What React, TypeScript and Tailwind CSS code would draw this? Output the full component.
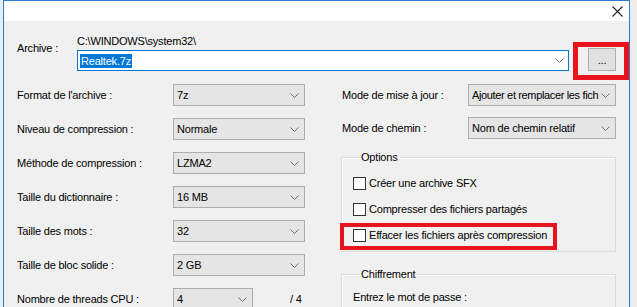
import React from 'react';

const font = { fontFamily: '"Liberation Sans", Arial, sans-serif' };

function Chevron() {
    return (
        <svg width="9" height="5" viewBox="0 0 9 5" className="shrink-0">
            <path d="M0.5 0.5 L4.5 4.5 L8.5 0.5" fill="none" stroke="#707070" strokeWidth="1" />
        </svg>
    );
}

function Select({ value, width }: { value: string; width: string }) {
    return (
        <div
            className={`${width} h-[22px] flex items-center border border-[#adadad] bg-[#e5e5e5] pl-[3px] pr-[5px]`}
        >
            <span className="flex-1 overflow-hidden whitespace-nowrap">{value}</span>
            <Chevron />
        </div>
    );
}

function Row({ label, children }: { label: string; children: React.ReactNode }) {
    return (
        <div className="flex items-center h-[22px]">
            <span className="w-[156px] shrink-0">{label}</span>
            {children}
        </div>
    );
}

function Check({ label }: { label: string }) {
    return (
        <div className="flex items-center h-[16px]">
            <span className="w-[13px] h-[13px] border border-[#333333] bg-white shrink-0" />
            <span className="ml-[3px]">{label}</span>
        </div>
    );
}

export default function App() {
    return (
        <div
            className="relative w-[637px] h-[307px] overflow-hidden bg-[#ececec] text-[11px] leading-[14px] tracking-[-0.2px] text-black"
            style={font}
        >
            <div className="ml-[3px] w-[627px] h-[307px] border-x border-t border-[#2a7ecf] flex flex-col">
                {/* title bar */}
                <div className="h-[20px] bg-white flex justify-end items-center pr-[6px] shrink-0">
                    <svg width="11" height="11" viewBox="0 0 11 11">
                        <path d="M0.5 0.5 L10.5 10.5 M10.5 0.5 L0.5 10.5" stroke="#222" strokeWidth="1.1" />
                    </svg>
                </div>

                <div className="flex-1 bg-[#f0f0f0] pl-[13px] pt-[13px]">
                    {/* archive */}
                    <div className="flex items-start">
                        <span className="w-[60px] pt-[7px]">Archive :</span>
                        <div className="flex flex-col">
                            <span className="h-[14px]">C:\WINDOWS\system32\</span>
                            <div className="mt-[2px] w-[492px] h-[21px] bg-white border border-[#0078d7] flex items-center pl-[2px] pr-[4px]">
                                <span className="flex-1">
                                    <span className="bg-[#0078d7] text-white px-[1px] py-[1px]">Realtek.7z</span>
                                </span>
                                <Chevron />
                            </div>
                        </div>
                        <div className="ml-[19px] mt-[14px] w-[28px] h-[23px] border border-[#adadad] bg-[#e1e1e1] flex items-center justify-center">
                            ...
                        </div>
                    </div>

                    <div className="flex mt-[13px]">
                        {/* left column */}
                        <div className="flex flex-col gap-[12px] w-[324px]">
                            <Row label="Format de l'archive :">
                                <Select value="7z" width="w-[132px]" />
                            </Row>
                            <Row label="Niveau de compression :">
                                <Select value="Normale" width="w-[132px]" />
                            </Row>
                            <Row label="Méthode de compression :">
                                <Select value="LZMA2" width="w-[132px]" />
                            </Row>
                            <Row label="Taille du dictionnaire :">
                                <Select value="16 MB" width="w-[132px]" />
                            </Row>
                            <Row label="Taille des mots :">
                                <Select value="32" width="w-[132px]" />
                            </Row>
                            <Row label="Taille de bloc solide :">
                                <Select value="2 GB" width="w-[132px]" />
                            </Row>
                            <Row label="Nombre de threads CPU :">
                                <Select value="4" width="w-[80px]" />
                                <span className="ml-[37px]">/ 4</span>
                            </Row>
                        </div>

                        {/* right column */}
                        <div className="flex flex-col w-[275px]">
                            <div className="flex items-center h-[22px] pl-[1px]">
                                <span className="w-[126px] shrink-0">Mode de mise à jour :</span>
                                <div className="w-[148px] h-[22px] flex items-center border border-[#adadad] bg-[#e5e5e5] pl-[3px] pr-[5px]">
                                    <span className="flex-1 whitespace-nowrap tracking-[-0.35px]">
                                        Ajouter et remplacer les fich
                                    </span>
                                    <Chevron />
                                </div>
                            </div>
                            <div className="flex items-center h-[22px] pl-[1px] mt-[11px]">
                                <span className="w-[126px] shrink-0">Mode de chemin :</span>
                                <Select value="Nom de chemin relatif" width="w-[148px]" />
                            </div>

                            <fieldset className="mt-[11px] border border-[#dcdcdc] shadow-[inset_1px_1px_0_#ffffff] pl-[11px] pb-[8px]">
                                <legend className="ml-[7px] px-[1px]">Options</legend>
                                <div className="flex flex-col gap-[10px] pt-[11px]">
                                    <Check label="Créer une archive SFX" />
                                    <Check label="Compresser des fichiers partagés" />
                                    <Check label="Effacer les fichiers après compression" />
                                </div>
                            </fieldset>

                            <fieldset className="mt-[15px] border border-[#dcdcdc] shadow-[inset_1px_1px_0_#ffffff] pl-[11px] pb-[20px]">
                                <legend className="ml-[7px] px-[1px]">Chiffrement</legend>
                                <div className="pt-[9px] h-[25px]">Entrez le mot de passe :</div>
                            </fieldset>
                        </div>
                    </div>
                </div>
            </div>

            {/* annotation boxes */}
            <div className="absolute left-[573px] top-[42px] w-[56px] h-[38px] border-[5px] border-[#e8131c]" />
            <div className="absolute left-[340px] top-[223px] w-[217px] h-[27px] border-[4px] border-[#e8131c]" />
        </div>
    );
}
